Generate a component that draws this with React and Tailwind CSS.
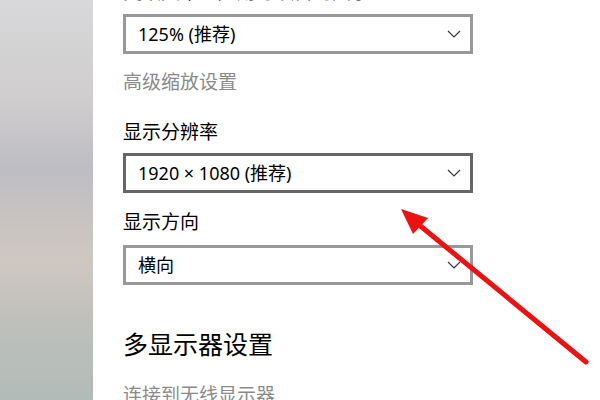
import React from 'react';

const Chevron = () => (
  <svg width="14" height="8" viewBox="0 0 14 8" className="shrink-0">
    <path d="M1 1 L7 7 L13 1" fill="none" stroke="#333" strokeWidth="1.1" />
  </svg>
);

const Dropdown = ({ valor, borda = 'border-[#999999]' }) => (
  <div className={`w-[350px] h-[40px] border-[3px] ${borda} bg-white flex items-center justify-between pl-[12px] pr-[9px]`}>
    <span className="text-[18px] text-black leading-none">{valor}</span>
    <Chevron />
  </div>
);

export default function App() {
  return (
    <div
      className="relative w-[600px] h-[400px] overflow-hidden bg-white flex"
      style={{ fontFamily: '"Segoe UI", "Noto Sans", "Noto Sans CJK SC", sans-serif' }}
    >
      {/* barra lateral com fundo desfocado */}
      <div className="w-[93px] h-full shrink-0 bg-[linear-gradient(to_bottom,#d8d8da_0%,#cfcdcd_25%,#bebdc3_42%,#cfc8c1_65%,#bfc0bc_80%,#b1bbb8_100%)]" />

      <div className="flex-1 pl-[30px] flex flex-col">
        <div className="mt-[-22px] h-[28px] leading-[28px] text-[19px] text-black whitespace-nowrap">更改文本、应用等项目的大小</div>
        <div className="mt-[8px]">
          <Dropdown valor="125% (推荐)" />
        </div>
        <div className="mt-[14px] h-[28px] leading-[28px] text-[19px] text-[#8a8a8a]">高级缩放设置</div>
        <div className="mt-[22px] h-[28px] leading-[28px] text-[19px] text-black">显示分辨率</div>
        <div className="mt-[7px]">
          <Dropdown valor="1920 × 1080 (推荐)" borda="border-[#666666]" />
        </div>
        <div className="mt-[15px] h-[28px] leading-[28px] text-[19px] text-black">显示方向</div>
        <div className="mt-[9px]">
          <Dropdown valor="横向" />
        </div>
        <div className="mt-[41px] h-[36px] leading-[36px] text-[25px] text-black">多显示器设置</div>
        <div className="mt-[19px] h-[28px] leading-[28px] text-[19px] text-[#8a8a8a]">连接到无线显示器</div>
      </div>

      {/* seta vermelha */}
      <svg className="absolute inset-0 pointer-events-none" width="600" height="400" viewBox="0 0 600 400">
        <line x1="586" y1="362" x2="418" y2="224" stroke="#f01010" strokeWidth="5" strokeLinecap="round" />
        <polygon points="401,209 428,218 413,234" fill="#f01010" />
      </svg>
    </div>
  );
}
